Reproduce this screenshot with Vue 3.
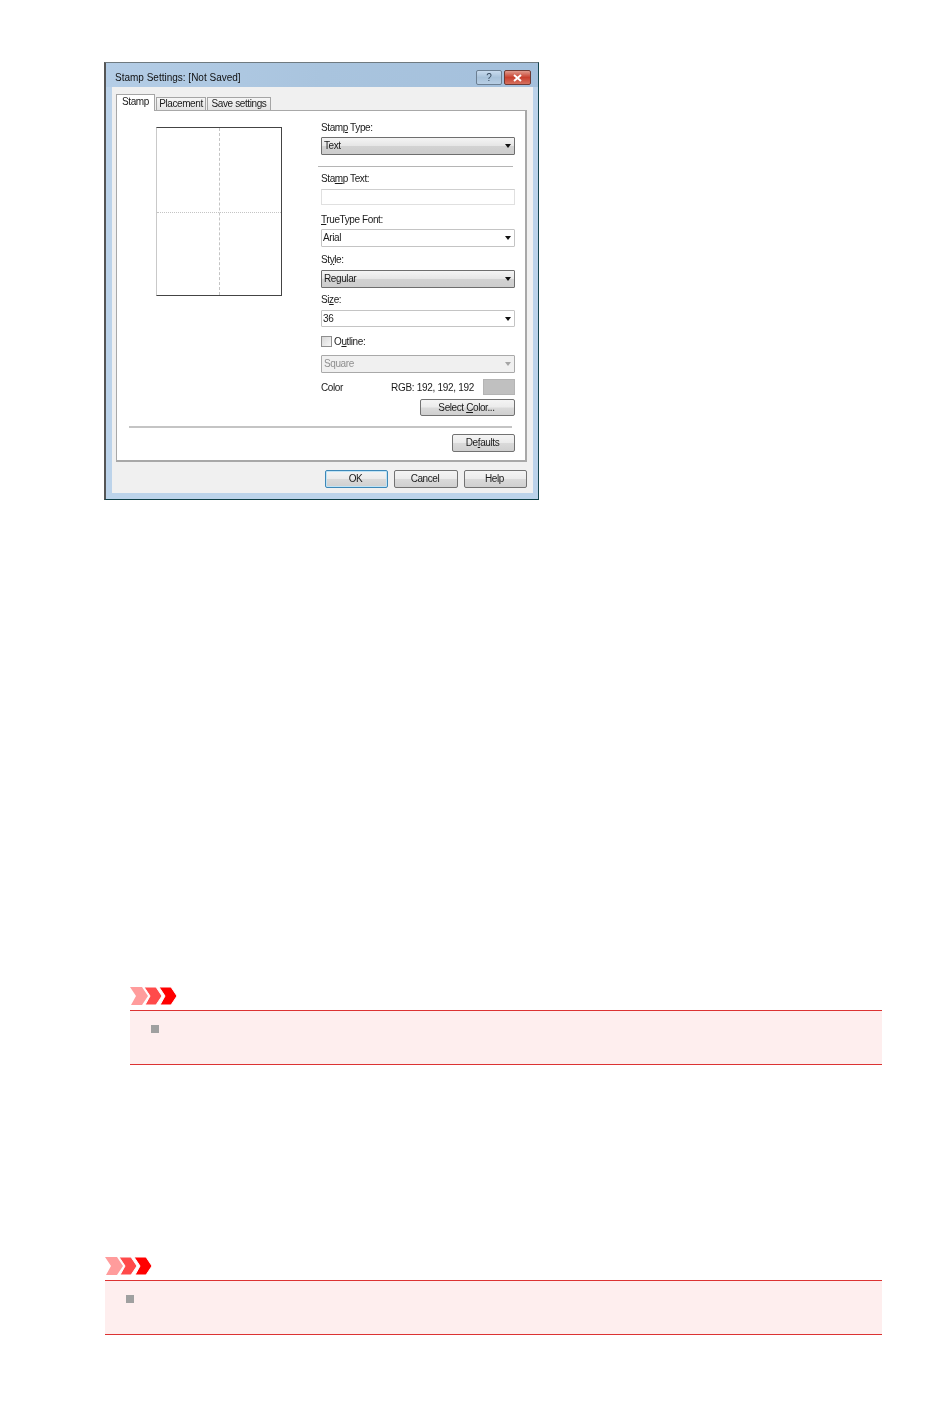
<template>
  <main class="page">
    <section class="dialog">
      <header class="titlebar">
        <span class="title">Stamp Settings: [Not Saved]</span>
        <div class="win_btns">
          <button class="win_btn win_help">?</button>
          <button class="win_btn win_close">
            <svg width="9" height="8" viewBox="0 0 9 8"><path d="M1 1l7 6M8 1L1 7" stroke="#fff" stroke-width="2" /></svg>
          </button>
        </div>
      </header>

      <div class="client">
        <div class="tabs">
          <div class="tab tab_active">Stamp</div>
          <div class="tab tab_placement">Placement</div>
          <div class="tab tab_save">Save settings</div>
        </div>

        <div class="panel">
          <div class="panel_top">
            <div class="preview">
              <span class="guide_v"></span>
              <span class="guide_h"></span>
            </div>

            <div class="form">
              <label class="lbl">Stam<u>p</u> Type:</label>
              <div class="combo combo_grey">Text<i class="arrow"></i></div>
              <div class="sep"></div>
              <label class="lbl">Sta<u>m</u>p Text:</label>
              <div class="text_input"></div>
              <label class="lbl lbl_font"><u>T</u>rueType Font:</label>
              <div class="combo">Arial<i class="arrow"></i></div>
              <label class="lbl lbl_style">St<u>y</u>le:</label>
              <div class="combo combo_grey combo_low">Regular<i class="arrow"></i></div>
              <label class="lbl lbl_size">Si<u>z</u>e:</label>
              <div class="combo combo_low combo_short">36<i class="arrow"></i></div>
              <div class="outline_row">
                <span class="check"></span>
                <span>O<u>u</u>tline:</span>
              </div>
              <div class="combo combo_off">Square<i class="arrow"></i></div>
              <div class="color_row">
                <span>Color</span>
                <span class="rgb">RGB: 192, 192, 192</span>
                <span class="swatch"></span>
              </div>
              <div class="select_row">
                <button class="btn btn_select">Select <u>C</u>olor...</button>
              </div>
            </div>
          </div>

          <div class="rule"></div>
          <div class="defaults_row">
            <button class="btn btn_defaults">De<u>f</u>aults</button>
          </div>
        </div>

        <div class="actions">
          <button class="btn btn_action btn_ok">OK</button>
          <button class="btn btn_action btn_cancel">Cancel</button>
          <button class="btn btn_action">Help</button>
        </div>
      </div>
    </section>

    <section class="note note_first">
      <svg class="chevrons" width="47" height="18" viewBox="0 0 47 18">
        <polygon points="0,0 12,0 18,9 12,18 1,18 6,9" fill="#ff9c9c" />
        <polygon points="14,0 26,0 32,9 26,18 15,18 20,9" fill="#ff4a4a" stroke="#fff" stroke-width="1" />
        <polygon points="29,0 41,0 47,9 41,18 30,18 35,9" fill="#ff0000" stroke="#fff" stroke-width="1" />
      </svg>
      <div class="note_box"><span class="bullet"></span></div>
    </section>

    <section class="note note_second">
      <svg class="chevrons" width="47" height="18" viewBox="0 0 47 18">
        <polygon points="0,0 12,0 18,9 12,18 1,18 6,9" fill="#ff9c9c" />
        <polygon points="14,0 26,0 32,9 26,18 15,18 20,9" fill="#ff4a4a" stroke="#fff" stroke-width="1" />
        <polygon points="29,0 41,0 47,9 41,18 30,18 35,9" fill="#ff0000" stroke="#fff" stroke-width="1" />
      </svg>
      <div class="note_box"><span class="bullet"></span></div>
    </section>
  </main>
</template>

<script setup>
</script>

<style>
html,
body {
  background: #fff;
}
</style>

<style scoped>
.page {
  box-sizing: border-box;
  width: 950px;
  height: 1419px;
  padding: 62px 68px 0 104px;
  font-family: "Liberation Sans", Arial, sans-serif;
  font-size: 10px;
  letter-spacing: -0.4px;
  color: #1a1a1a;
  overflow: hidden;
}

/* 창 */
.dialog {
  box-sizing: border-box;
  width: 435px;
  height: 438px;
  display: flex;
  flex-direction: column;
  background: #bcd3ea;
  border-top: 1px solid #6f7a80;
  border-left: 2px solid #555;
  border-right: 1px solid #17464f;
  border-bottom: 1px solid #0f3f46;
  filter: blur(0.6px);
}
.titlebar {
  box-sizing: border-box;
  height: 24px;
  flex: none;
  display: flex;
  align-items: center;
  justify-content: space-between;
  padding: 5px 7px 0 9px;
  background: linear-gradient(90deg, #b4cde6 0%, #a9c4de 50%, #a4c0dc 100%);
}
.title {
  color: #111;
  letter-spacing: 0;
}
.win_btns {
  display: flex;
  gap: 2px;
}
.win_btn {
  width: 26px;
  height: 15px;
  padding: 0;
  display: flex;
  align-items: center;
  justify-content: center;
  font: 10px "Liberation Sans", Arial, sans-serif;
  border: 1px solid #6c7f92;
  border-radius: 2px;
}
.win_help {
  color: #33475c;
  background: linear-gradient(#c8dbee, #a8c2da 50%, #b7cee4);
}
.win_close {
  width: 27px;
  background: linear-gradient(#e09a8c, #c8402f 50%, #d5705e);
  border-color: #6e3a34;
}

.client {
  flex: 1;
  margin: 0 5px 6px 6px;
  padding: 7px 6px 0 4px;
  background: #f0f0f0;
}

/* 탭 */
.tabs {
  display: flex;
  align-items: flex-end;
  height: 16px;
  position: relative;
  z-index: 1;
}
.tab {
  box-sizing: border-box;
  height: 13px;
  margin-right: 1px;
  text-align: center;
  line-height: 11px;
  background: linear-gradient(#f6f6f6, #e4e4e4);
  border: 1px solid #a5a5a5;
  border-bottom: 0;
}
.tab_active {
  width: 39px;
  height: 17px;
  margin-bottom: -1px;
  padding-top: 1px;
  background: #fff;
}
.tab_placement {
  width: 50px;
}
.tab_save {
  width: 64px;
}

.panel {
  box-sizing: border-box;
  height: 352px;
  background: #fff;
  border: 1px solid #a8a8a8;
  border-width: 1px 2px 2px 1px;
}
.panel_top {
  display: flex;
  align-items: flex-start;
  gap: 39px;
  padding-left: 39px;
}

/* 미리보기 */
.preview {
  box-sizing: border-box;
  position: relative;
  width: 126px;
  height: 169px;
  margin-top: 16px;
  border: 1px solid #444;
  border-left-color: #c9c9c9;
}
.guide_v {
  position: absolute;
  left: 62px;
  top: 0;
  bottom: 0;
  border-left: 1px dashed #c4c4c4;
}
.guide_h {
  position: absolute;
  top: 84px;
  left: 0;
  right: 0;
  border-top: 1px dotted #c4c4c4;
}

/* 오른쪽 폼 */
.form {
  width: 194px;
  padding-top: 11px;
}
.lbl {
  display: block;
  height: 12px;
  line-height: 12px;
  white-space: nowrap;
}
.combo {
  box-sizing: border-box;
  position: relative;
  height: 18px;
  margin-top: 3px;
  padding-left: 1px;
  line-height: 16px;
  background: #fff;
  border: 1px solid #c4c4c4;
  border-radius: 1px;
}
.combo_grey {
  padding-left: 2px;
  border-color: #6e6e6e;
  background: linear-gradient(#f4f4f4, #e6e6e6 48%, #d2d2d2 52%, #cdcdcd);
}
.combo_low {
  margin-top: 4px;
}
.combo_short {
  height: 17px;
  line-height: 15px;
}
.combo_off {
  margin-top: 8px;
  padding-left: 2px;
  color: #8f8f8f;
  background: #f0f0f0;
  border-color: #a9a9a9;
}
.arrow {
  position: absolute;
  right: 3px;
  top: 6px;
  width: 0;
  height: 0;
  border: 3.5px solid transparent;
  border-top: 4px solid #111;
  border-bottom: 0;
}
.combo_off .arrow {
  border-top-color: #a5a5a5;
}
.sep {
  width: 195px;
  height: 1px;
  margin: 11px 0 6px -3px;
  background: #b5b5b5;
}
.text_input {
  box-sizing: border-box;
  height: 16px;
  margin-top: 4px;
  background: #fff;
  border: 1px solid #e0e0e0;
  border-top-color: #cfcfcf;
}
.lbl_font {
  margin-top: 9px;
}
.lbl_style {
  margin-top: 7px;
}
.lbl_size {
  margin-top: 6px;
}
.outline_row {
  display: flex;
  align-items: center;
  gap: 2px;
  height: 11px;
  margin-top: 9px;
}
.check {
  box-sizing: border-box;
  width: 11px;
  height: 11px;
  background: linear-gradient(135deg, #d8d8d8, #f6f6f6);
  border: 1px solid #8e8e8e;
}
.color_row {
  display: flex;
  align-items: center;
  height: 16px;
  margin-top: 6px;
}
.rgb {
  margin-left: auto;
  margin-right: 9px;
  letter-spacing: -0.3px;
}
.swatch {
  box-sizing: border-box;
  width: 32px;
  height: 16px;
  background: #c0c0c0;
  border: 1px solid #b4b4b4;
}
.select_row {
  display: flex;
  justify-content: flex-end;
  margin-top: 4px;
}

/* 버튼 */
.btn {
  box-sizing: border-box;
  height: 18px;
  padding: 0 2px 1px 0;
  font: 10px "Liberation Sans", Arial, sans-serif;
  letter-spacing: -0.4px;
  color: #1a1a1a;
  background: linear-gradient(#f4f4f4, #ebebeb 48%, #dadada 52%, #cfcfcf);
  border: 1px solid #727272;
  border-radius: 2px;
}
.btn_select {
  width: 95px;
  height: 17px;
}
.btn_defaults {
  width: 63px;
}
.btn_action {
  width: 63px;
}
.btn_cancel {
  width: 64px;
}
.btn_ok {
  border-color: #3d88b8;
  box-shadow: inset 0 0 0 1px #bfe3f5;
}

.rule {
  height: 2px;
  margin: 10px 13px 0 12px;
  background: #c4c4c4;
}
.defaults_row {
  display: flex;
  justify-content: flex-end;
  margin-top: 6px;
  padding-right: 10px;
}
.actions {
  display: flex;
  justify-content: flex-end;
  gap: 6px;
  margin-top: 8px;
}

/* 주의 박스 */
.chevrons {
  display: block;
}
.note_first {
  margin: 487px 0 0 26px;
}
.note_second {
  margin: 192px 0 0 1px;
}
.note_box {
  box-sizing: border-box;
  height: 55px;
  margin-top: 5px;
  padding: 14px 0 0 21px;
  background: #feeeee;
  border-top: 1px solid #dc3232;
  border-bottom: 1px solid #dc3232;
}
.bullet {
  display: block;
  width: 8px;
  height: 8px;
  background: #a0a0a0;
}
</style>
